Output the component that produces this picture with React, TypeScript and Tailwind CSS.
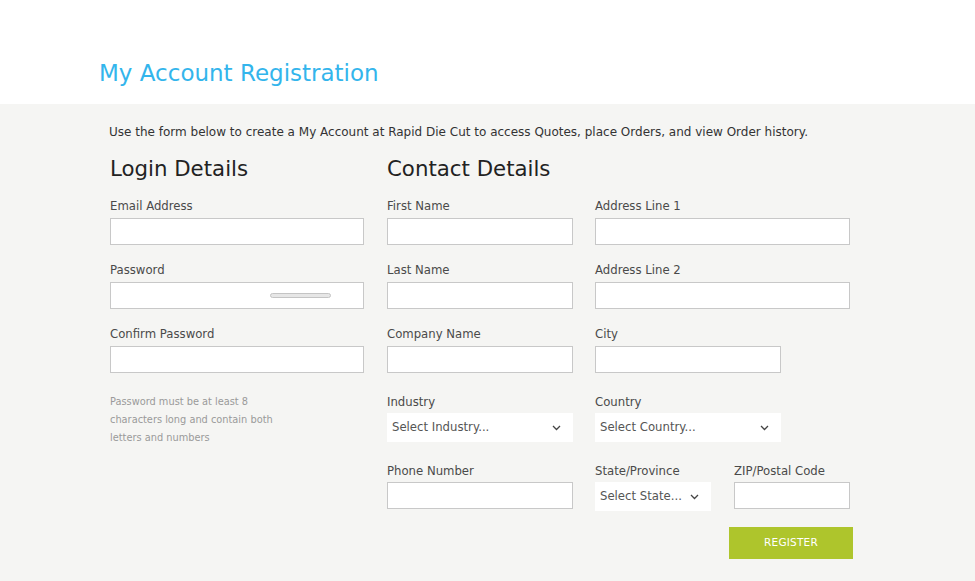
import React from "react";

const font = { fontFamily: '"DejaVu Sans", "Open Sans", sans-serif' };

function Label({ children, mb = "mb-[4px]" }: { children: React.ReactNode; mb?: string }) {
  return <div className={`text-[11.7px] leading-[16px] text-[#4a4a4a] ${mb}`}>{children}</div>;
}

function Input({ w, children }: { w: string; children?: React.ReactNode }) {
  return <div className={`relative ${w} h-[27px] bg-white border border-[#c8c8c8]`}>{children}</div>;
}

function Chevron() {
  return (
    <svg width="9" height="6" viewBox="0 0 9 6" className="shrink-0">
      <path d="M1 1l3.5 3.5L8 1" fill="none" stroke="#444" strokeWidth="1.3" />
    </svg>
  );
}

function Select({ w, text }: { w: string; text: string }) {
  return (
    <div className={`${w} h-[29px] bg-white flex items-center justify-between pl-[5px] pr-[12px] text-[11.7px] text-[#555]`}>
      <span>{text}</span>
      <Chevron />
    </div>
  );
}

export default function App() {
  return (
    <div style={font} className="w-[975px] h-[581px] overflow-hidden bg-[#f5f5f3]">
      <div className="bg-white h-[104px] pl-[99px] pt-[57px]">
        <h1 className="text-[23px] leading-[32px] text-[#33b5ec] font-normal">My Account Registration</h1>
      </div>
      <div className="pl-[109px] pt-[20px]">
        <p className="text-[12px] leading-[16px] text-[#333]">
          Use the form below to create a My Account at Rapid Die Cut to access Quotes, place Orders, and view Order history.
        </p>
        <div className="flex mt-[15px]">
          {/* Login */}
          <div className="w-[254px] ml-[1px] flex flex-col">
            <h2 className="text-[21.3px] leading-[28px] text-[#222] mb-[15px]">Login Details</h2>
            <Label>Email Address</Label>
            <Input w="w-[254px]" />
            <div className="mt-[17px]">
              <Label>Password</Label>
              <Input w="w-[254px]">
                <div className="absolute left-[159px] top-[10px] w-[61px] h-[5px] rounded-full bg-[#e6e6e6] border border-[#c4c4c4]" />
              </Input>
            </div>
            <div className="mt-[17px]">
              <Label>Confirm Password</Label>
              <Input w="w-[254px]" />
            </div>
            <p className="mt-[20px] w-[185px] text-[9.8px] leading-[18px] text-[#9a9a9a]">
              Password must be at least 8 characters long and contain both letters and numbers
            </p>
          </div>
          {/* Contact */}
          <div className="ml-[23px] flex flex-col">
            <h2 className="text-[21.3px] leading-[28px] text-[#222] mb-[15px]">Contact Details</h2>
            <div className="grid grid-cols-[186px_255px] gap-x-[22px]">
              <div>
                <Label>First Name</Label>
                <Input w="w-[186px]" />
              </div>
              <div>
                <Label>Address Line 1</Label>
                <Input w="w-[255px]" />
              </div>
              <div className="mt-[17px]">
                <Label>Last Name</Label>
                <Input w="w-[186px]" />
              </div>
              <div className="mt-[17px]">
                <Label>Address Line 2</Label>
                <Input w="w-[255px]" />
              </div>
              <div className="mt-[17px]">
                <Label>Company Name</Label>
                <Input w="w-[186px]" />
              </div>
              <div className="mt-[17px]">
                <Label>City</Label>
                <Input w="w-[186px]" />
              </div>
              <div className="mt-[21px]">
                <Label mb="mb-[3px]">Industry</Label>
                <Select w="w-[186px]" text="Select Industry..." />
              </div>
              <div className="mt-[21px]">
                <Label mb="mb-[3px]">Country</Label>
                <Select w="w-[186px]" text="Select Country..." />
              </div>
              <div className="mt-[21px]">
                <Label mb="mb-[3px]">Phone Number</Label>
                <Input w="w-[186px]" />
              </div>
              <div className="mt-[21px] flex gap-x-[23px]">
                <div>
                  <Label mb="mb-[3px]">State/Province</Label>
                  <Select w="w-[116px]" text="Select State..." />
                </div>
                <div>
                  <Label mb="mb-[3px]">ZIP/Postal Code</Label>
                  <Input w="w-[116px]" />
                </div>
              </div>
            </div>
            <div className="flex justify-end mt-[16px] w-[466px]">
              <button className="w-[124px] h-[32px] bg-[#aec52c] text-white text-[10.5px] tracking-[0.2px]">REGISTER</button>
            </div>
          </div>
        </div>
      </div>
    </div>
  );
}
